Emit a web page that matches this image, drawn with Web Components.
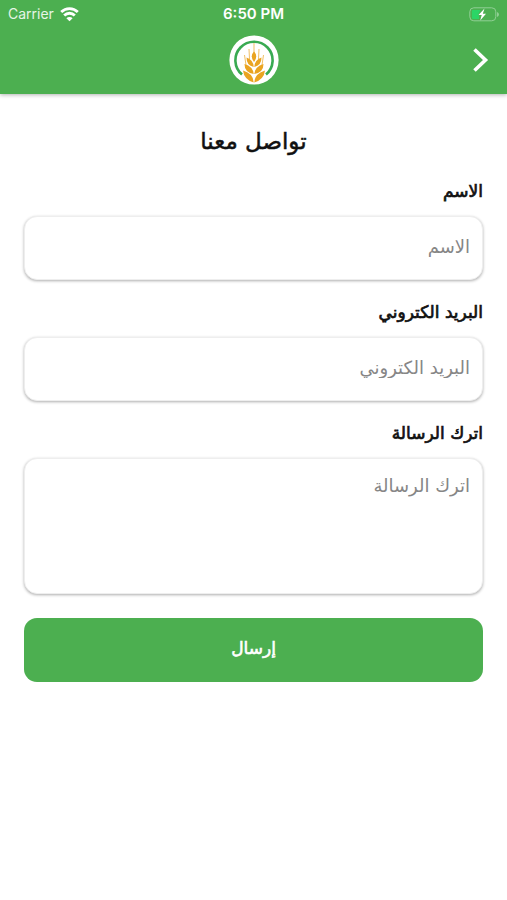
<!DOCTYPE html>
<html lang="ar" dir="rtl">
<head>
<meta charset="utf-8">
<meta name="viewport" content="width=device-width, initial-scale=1">
<title>تواصل معنا</title>
<style>
body { margin: 0; background: #fff; --green: #4caf50; --arabic: "DejaVu Sans", sans-serif; font-family: var(--arabic); color: #111; }
</style>
</head>
<body>
<contact-page></contact-page>
<script>
const define = (name, html) => customElements.define(name, class extends HTMLElement {
  constructor() {
    super();
    this.attachShadow({ mode: 'open' }).innerHTML = html;
  }
});

define('status-bar', `
<style>
:host { display: grid; grid-template-columns: 1fr auto 1fr; align-items: center; direction: ltr; height: 28px; padding: 0 8px; font: 14px/20px Inter, sans-serif; color: #fff; }
.carrier { display: flex; align-items: center; gap: 6px; color: #e6f5e6; }
.time { font-weight: 600; font-size: 15px; }
.battery { justify-self: end; }
svg { display: block; }
</style>
<div class="carrier"><span>Carrier</span>
<svg width="19" height="15" viewBox="0 0 19 15" fill="none" stroke="#fff" stroke-width="2.8"><path d="M1.2 5a11.8 11.8 0 0 1 16.6 0M4.2 8.5a7.4 7.4 0 0 1 10.6 0"/><path d="M9.5 14.2 6.4 11.2a4.4 4.4 0 0 1 6.2 0z" fill="#fff" stroke="none"/></svg></div>
<span class="time">6:50 PM</span>
<svg class="battery" width="30" height="15" viewBox="0 0 30 15"><rect x=".8" y=".8" width="26" height="13" rx="4" fill="none" stroke="#91cf94"/><path d="M3 3.5Q3 3 4 3h7.5L9 8h1v4H4q-1 0-1-1z" fill="#2bd566"/><path d="M28 5v5q2-.8 2-2.5t-2-2.5z" fill="#91cf94"/><path d="M15.5 1.5 9.5 8h3.2l-1.5 5.5L17 6.8h-3.2z" fill="#fff"/></svg>`);

define('wheat-logo', `
<style>:host { display: block; } svg { display: block; }</style>
<svg width="50" height="50" viewBox="0 0 50 50" role="img" aria-label="شعار السنبلة">
<circle cx="25" cy="25" r="24.6" fill="#fff"/>
<path d="M13 39.5A18.6 18.6 0 1 1 37 39.5" fill="none" stroke="#39aa52" stroke-width="2.6"/>
<g fill="#eaa421"><path d="M25 16.500Q29.500 21 25 27Q20.500 21 25 16.500z"/>
<path d="M24.700 32Q17.500 30.500 17.500 22.500Q24.500 25 24.700 32zM24.700 39Q15.500 37.500 15.500 29Q24 31.500 24.700 39zM24.700 47.500Q15 44.500 14 35.500Q24.500 38.500 24.700 47.500z"/>
<path d="M25.300 32Q32.500 30.500 32.500 22.500Q25.500 25 25.300 32zM25.300 39Q34.500 37.500 34.500 29Q26 31.500 25.300 39zM25.300 47.500Q35 44.500 36 35.500Q25.500 38.500 25.300 47.500z"/></g>
<path d="M25 8v10M20 14l.5 10M30 14l-.5 10M15.500 20l1.500 10M34.500 20l-1.500 10" stroke="#eaa421" stroke-width=".7" fill="none"/>
</svg>`);

define('app-header', `
<style>
:host { display: block; background: var(--green); box-shadow: 0 1px 4px rgba(0,0,0,.3); }
.bar { display: grid; grid-template-columns: 1fr auto 1fr; align-items: center; direction: ltr; height: 64px; padding: 0 17px 2px; }
wheat-logo { grid-column: 2; }
button { justify-self: end; display: block; padding: 0; border: 0; background: none; cursor: pointer; }
svg { display: block; }
</style>
<status-bar></status-bar>
<div class="bar"><wheat-logo></wheat-logo>
<button type="button" aria-label="رجوع"><svg width="20" height="26" viewBox="0 0 20 26" fill="none" stroke="#fff" stroke-width="3.6"><path d="M4.500 2.500 15.500 13 4.500 23.500"/></svg></button></div>`);

customElements.define('form-field', class extends HTMLElement {
  connectedCallback() {
    if (this.shadowRoot) return;
    const text = this.getAttribute('label');
    const control = this.hasAttribute('multiline')
      ? `<textarea id="control" placeholder="${text}"></textarea>`
      : `<input id="control" type="${this.getAttribute('type') || 'text'}" placeholder="${text}">`;
    this.attachShadow({ mode: 'open' }).innerHTML = `
<style>
:host { display: flex; flex-direction: column; gap: 13px; }
label { font: 17px/24px var(--arabic); -webkit-text-stroke: .7px; }
input, textarea { display: block; width: 100%; box-sizing: border-box; margin: 0; border: 1px solid #eee; border-radius: 13px; background: #fff; box-shadow: 0 1px 3px rgba(0,0,0,.32); font: 18px/24px var(--arabic); color: #111; direction: rtl; text-align: right; outline: none; resize: none; }
input { height: 64px; padding: 0 12px 4px; }
textarea { height: 136px; padding: 15px 12px; }
::placeholder { color: #868686; opacity: 1; }
</style>
<label for="control">${text}</label>${control}`;
  }
});

define('submit-button', `
<style>
:host { display: block; }
button { display: block; width: 100%; height: 64px; padding: 0 0 4px; border: 0; border-radius: 13px; background: var(--green); color: #fff; font: 17px/24px var(--arabic); -webkit-text-stroke: .6px; cursor: pointer; }
</style>
<button type="submit"><slot></slot></button>`);

define('contact-page', `
<style>
:host { display: block; }
main { padding: 32px 24px; }
h1 { margin: 0 0 23px; font: 23px/30px var(--arabic); text-align: center; -webkit-text-stroke: .5px; }
form { display: flex; flex-direction: column; gap: 20px; }
submit-button { margin-top: 4px; }
</style>
<app-header></app-header>
<main><h1>تواصل معنا</h1>
<form>
<form-field label="الاسم"></form-field>
<form-field label="البريد الكتروني" type="email"></form-field>
<form-field label="اترك الرسالة" multiline></form-field>
<submit-button>إرسال</submit-button>
</form></main>`);
</script>
</body>
</html>
